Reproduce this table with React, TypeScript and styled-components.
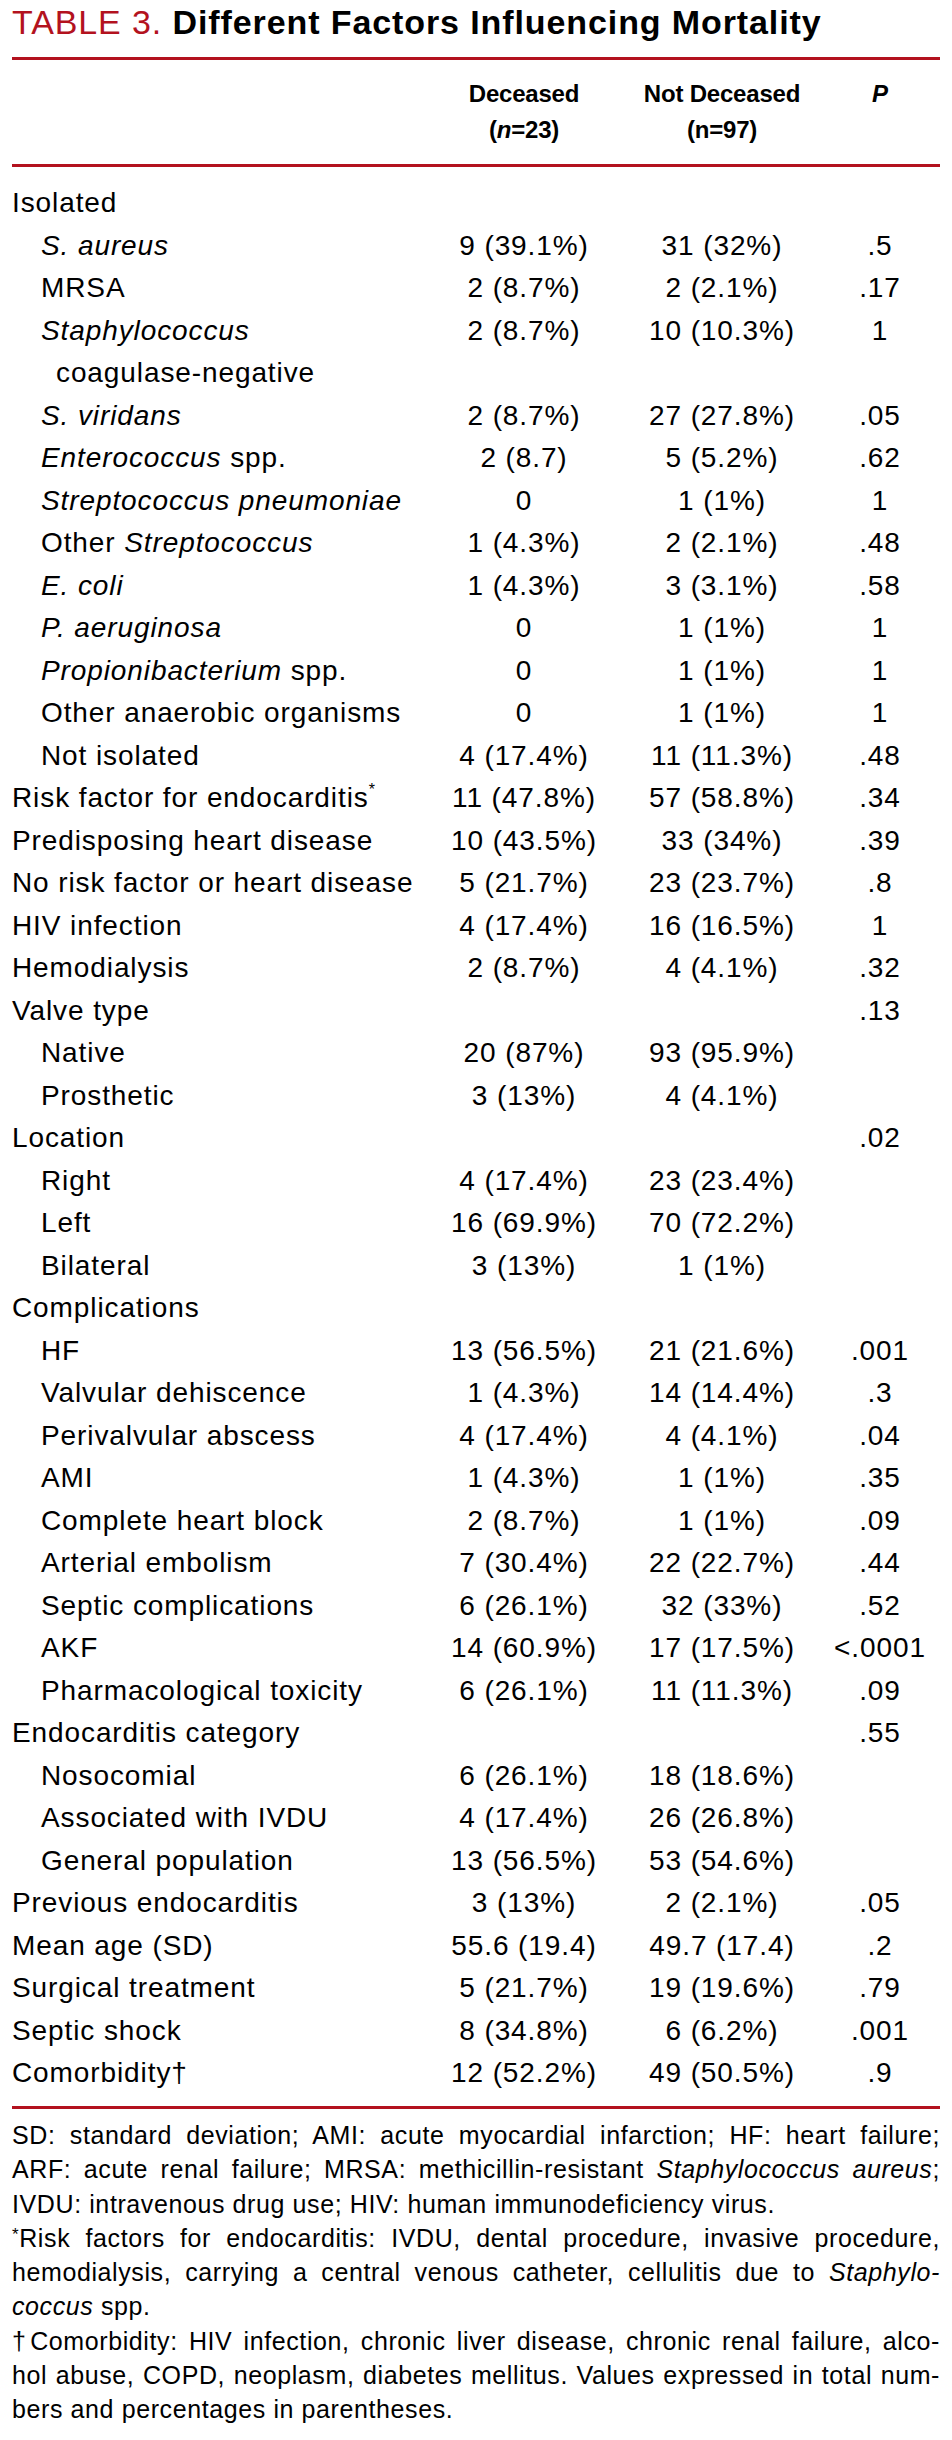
import React from "react";
import styled, { createGlobalStyle } from "styled-components";

const RED = "#b3121e";
const COLUMNS = "412px 200px 196px 120px";

const GlobalStyle = createGlobalStyle`
    html, body {
        margin: 0;
        padding: 0;
        background: #fff;
    }

    body {
        font-family: "Liberation Sans", Arial, sans-serif;
        color: #000;
    }
`;

const Page = styled.div`
    width: 928px;
    padding: 0 12px;
`;

const Title = styled.h1`
    margin: 2px 0 0;
    font-size: 34px;
    line-height: 40px;
    font-weight: 700;
    letter-spacing: 0.9px;
    white-space: nowrap;
`;

const TitleLabel = styled.span`
    color: ${RED};
    font-weight: 400;
`;

const Rule = styled.div<{ $gap: number }>`
    height: 3px;
    margin-top: ${p => p.$gap}px;
    background: ${RED};
`;

const Header = styled.div`
    display: grid;
    grid-template-columns: ${COLUMNS};
    padding: 16px 0;
    font-size: 24px;
    line-height: 36px;
    font-weight: 700;
    letter-spacing: -0.2px;
`;

const HeaderCell = styled.div`
    display: flex;
    flex-direction: column;
    align-items: center;
`;

const Body = styled.div`
    padding: 15px 0 11px;
`;

const Row = styled.div`
    display: grid;
    grid-template-columns: ${COLUMNS};
    font-size: 28px;
    line-height: 42.5px;
    letter-spacing: 0.9px;
`;

const Label = styled.div<{ $indent: number }>`
    padding-left: ${p => p.$indent * 29}px;
    white-space: nowrap;
`;

const Continuation = styled.div`
    padding-left: 15px;
`;

const Value = styled.div`
    text-align: center;
    white-space: nowrap;
`;

const Sup = styled.sup`
    font-size: 16px;
    line-height: 0;
    vertical-align: 12px;
`;

const Notes = styled.div`
    padding-top: 9.5px;
    font-size: 25px;
    line-height: 34.3px;
    letter-spacing: 0.6px;
`;

const NoteLine = styled.div<{ $justify?: boolean }>`
    white-space: nowrap;
    text-align: ${p => (p.$justify ? "justify" : "left")};
    text-align-last: ${p => (p.$justify ? "justify" : "left")};
`;

const NoteMark = styled.span`
    font-size: 17px;
    vertical-align: 7px;
    line-height: 0;
`;

type Item = {
    label: React.ReactNode;
    indent: number;
    dec?: string;
    notDec?: string;
    p?: string;
    extra?: string;
};

const rows: Item[] = [
    { label: "Isolated", indent: 0 },
    { label: <i>S. aureus</i>, indent: 1, dec: "9 (39.1%)", notDec: "31 (32%)", p: ".5" },
    { label: "MRSA", indent: 1, dec: "2 (8.7%)", notDec: "2 (2.1%)", p: ".17" },
    {
        label: <i>Staphylococcus</i>,
        extra: "coagulase-negative",
        indent: 1,
        dec: "2 (8.7%)",
        notDec: "10 (10.3%)",
        p: "1",
    },
    { label: <i>S. viridans</i>, indent: 1, dec: "2 (8.7%)", notDec: "27 (27.8%)", p: ".05" },
    {
        label: (
            <>
                <i>Enterococcus</i> spp.
            </>
        ),
        indent: 1,
        dec: "2 (8.7)",
        notDec: "5 (5.2%)",
        p: ".62",
    },
    { label: <i>Streptococcus pneumoniae</i>, indent: 1, dec: "0", notDec: "1 (1%)", p: "1" },
    {
        label: (
            <>
                Other <i>Streptococcus</i>
            </>
        ),
        indent: 1,
        dec: "1 (4.3%)",
        notDec: "2 (2.1%)",
        p: ".48",
    },
    { label: <i>E. coli</i>, indent: 1, dec: "1 (4.3%)", notDec: "3 (3.1%)", p: ".58" },
    { label: <i>P. aeruginosa</i>, indent: 1, dec: "0", notDec: "1 (1%)", p: "1" },
    {
        label: (
            <>
                <i>Propionibacterium</i> spp.
            </>
        ),
        indent: 1,
        dec: "0",
        notDec: "1 (1%)",
        p: "1",
    },
    { label: "Other anaerobic organisms", indent: 1, dec: "0", notDec: "1 (1%)", p: "1" },
    { label: "Not isolated", indent: 1, dec: "4 (17.4%)", notDec: "11 (11.3%)", p: ".48" },
    {
        label: (
            <>
                Risk factor for endocarditis<Sup>*</Sup>
            </>
        ),
        indent: 0,
        dec: "11 (47.8%)",
        notDec: "57 (58.8%)",
        p: ".34",
    },
    { label: "Predisposing heart disease", indent: 0, dec: "10 (43.5%)", notDec: "33 (34%)", p: ".39" },
    { label: "No risk factor or heart disease", indent: 0, dec: "5 (21.7%)", notDec: "23 (23.7%)", p: ".8" },
    { label: "HIV infection", indent: 0, dec: "4 (17.4%)", notDec: "16 (16.5%)", p: "1" },
    { label: "Hemodialysis", indent: 0, dec: "2 (8.7%)", notDec: "4 (4.1%)", p: ".32" },
    { label: "Valve type", indent: 0, p: ".13" },
    { label: "Native", indent: 1, dec: "20 (87%)", notDec: "93 (95.9%)" },
    { label: "Prosthetic", indent: 1, dec: "3 (13%)", notDec: "4 (4.1%)" },
    { label: "Location", indent: 0, p: ".02" },
    { label: "Right", indent: 1, dec: "4 (17.4%)", notDec: "23 (23.4%)" },
    { label: "Left", indent: 1, dec: "16 (69.9%)", notDec: "70 (72.2%)" },
    { label: "Bilateral", indent: 1, dec: "3 (13%)", notDec: "1 (1%)" },
    { label: "Complications", indent: 0 },
    { label: "HF", indent: 1, dec: "13 (56.5%)", notDec: "21 (21.6%)", p: ".001" },
    { label: "Valvular dehiscence", indent: 1, dec: "1 (4.3%)", notDec: "14 (14.4%)", p: ".3" },
    { label: "Perivalvular abscess", indent: 1, dec: "4 (17.4%)", notDec: "4 (4.1%)", p: ".04" },
    { label: "AMI", indent: 1, dec: "1 (4.3%)", notDec: "1 (1%)", p: ".35" },
    { label: "Complete heart block", indent: 1, dec: "2 (8.7%)", notDec: "1 (1%)", p: ".09" },
    { label: "Arterial embolism", indent: 1, dec: "7 (30.4%)", notDec: "22 (22.7%)", p: ".44" },
    { label: "Septic complications", indent: 1, dec: "6 (26.1%)", notDec: "32 (33%)", p: ".52" },
    { label: "AKF", indent: 1, dec: "14 (60.9%)", notDec: "17 (17.5%)", p: "<.0001" },
    { label: "Pharmacological toxicity", indent: 1, dec: "6 (26.1%)", notDec: "11 (11.3%)", p: ".09" },
    { label: "Endocarditis category", indent: 0, p: ".55" },
    { label: "Nosocomial", indent: 1, dec: "6 (26.1%)", notDec: "18 (18.6%)" },
    { label: "Associated with IVDU", indent: 1, dec: "4 (17.4%)", notDec: "26 (26.8%)" },
    { label: "General population", indent: 1, dec: "13 (56.5%)", notDec: "53 (54.6%)" },
    { label: "Previous endocarditis", indent: 0, dec: "3 (13%)", notDec: "2 (2.1%)", p: ".05" },
    { label: "Mean age (SD)", indent: 0, dec: "55.6 (19.4)", notDec: "49.7 (17.4)", p: ".2" },
    { label: "Surgical treatment", indent: 0, dec: "5 (21.7%)", notDec: "19 (19.6%)", p: ".79" },
    { label: "Septic shock", indent: 0, dec: "8 (34.8%)", notDec: "6 (6.2%)", p: ".001" },
    { label: "Comorbidity†", indent: 0, dec: "12 (52.2%)", notDec: "49 (50.5%)", p: ".9" },
];

export default function App() {
    return (
        <Page>
            <GlobalStyle />
            <Title>
                <TitleLabel>TABLE 3.</TitleLabel> Different Factors Influencing Mortality
            </Title>
            <Rule $gap={15} />

            <Header>
                <div />
                <HeaderCell>
                    <span>Deceased</span>
                    <span>
                        (<i>n</i>=23)
                    </span>
                </HeaderCell>
                <HeaderCell>
                    <span>Not Deceased</span>
                    <span>(n=97)</span>
                </HeaderCell>
                <HeaderCell>
                    <i>P</i>
                </HeaderCell>
            </Header>
            <Rule $gap={0} />

            <Body>
                {rows.map((r, i) => (
                    <Row key={i}>
                        <Label $indent={r.indent}>
                            {r.label}
                            {r.extra && <Continuation>{r.extra}</Continuation>}
                        </Label>
                        <Value>{r.dec}</Value>
                        <Value>{r.notDec}</Value>
                        <Value>{r.p}</Value>
                    </Row>
                ))}
            </Body>
            <Rule $gap={0} />

            <Notes>
                <NoteLine $justify>
                    SD: standard deviation; AMI: acute myocardial infarction; HF: heart failure;
                </NoteLine>
                <NoteLine $justify>
                    ARF: acute renal failure; MRSA: methicillin-resistant <i>Staphylococcus aureus</i>;
                </NoteLine>
                <NoteLine>IVDU: intravenous drug use; HIV: human immunodeficiency virus.</NoteLine>
                <NoteLine $justify>
                    <NoteMark>*</NoteMark>Risk factors for endocarditis: IVDU, dental procedure, invasive procedure,
                </NoteLine>
                <NoteLine $justify>
                    hemodialysis, carrying a central venous catheter, cellulitis due to <i>Staphylo-</i>
                </NoteLine>
                <NoteLine>
                    <i>coccus</i> spp.
                </NoteLine>
                <NoteLine $justify>
                    †Comorbidity: HIV infection, chronic liver disease, chronic renal failure, alco-
                </NoteLine>
                <NoteLine $justify>
                    hol abuse, COPD, neoplasm, diabetes mellitus. Values expressed in total num-
                </NoteLine>
                <NoteLine>bers and percentages in parentheses.</NoteLine>
            </Notes>
        </Page>
    );
}
